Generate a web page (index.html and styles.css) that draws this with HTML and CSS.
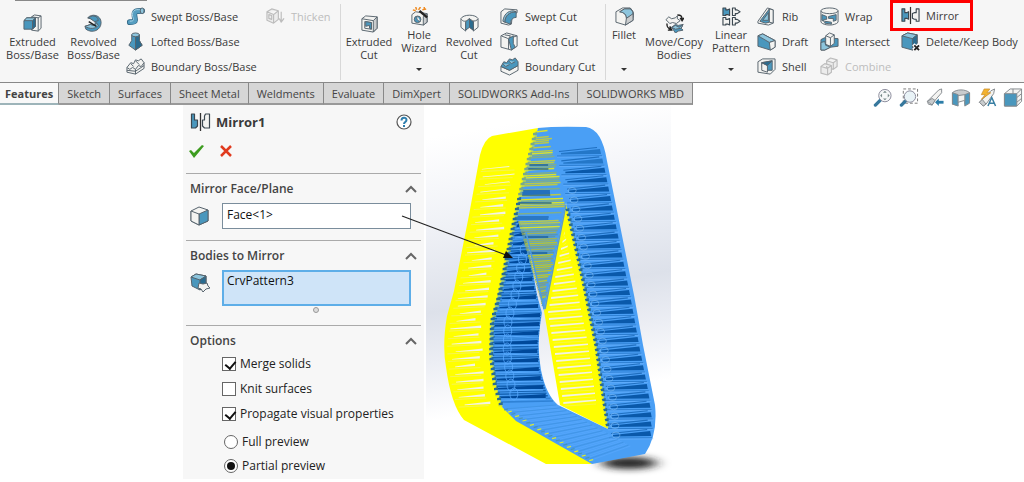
FILE: index.html
```html
<!DOCTYPE html>
<html lang="en">
<head>
<meta charset="utf-8">
<title>Mirror feature</title>
<link rel="stylesheet" href="styles.css">
</head>
<body>
<svg class="defs" aria-hidden="true">
  <symbol id="extrude" viewBox="0 0 20 20"><g class="o"><path class="w" d="M9 3l3-2 7 1v13l-3 3-7-1z"/><path class="w" d="M9 3l7 1v14M16 4l3-2"/><path class="b" d="M1 7l3-3h9v9l-3 3H1z"/><path class="d" d="M10 7l3-3v9l-3 3z"/><path class="l" d="M1 7l3-3h9l-3 3z"/></g></symbol>
  <symbol id="revolve" viewBox="0 0 20 20"><g class="o"><path class="b" d="M4 4C8-1 18 1 18 9c0 8-9 12-16 7l-1-3 6-2c4 2 6-1 4-4L7 5z"/><path class="l" d="M1 13l6-2c3 2 6 1 6-2l2 3c-3 4-9 4-14 1z"/><path class="b" d="M4 4l5-2c4 0 6 2 6 5l-4 1-4-3z"/></g><path d="M5 8l8 5" stroke="#222" stroke-width="1.500" fill="none"/></symbol>
  <symbol id="sweep" viewBox="0 0 20 20"><path d="M4 16c7 0 6-2 5-6-1-6 2-6 8-6" fill="none" stroke="#2f6482" stroke-width="6" stroke-linecap="round"/><path d="M4 16c7 0 6-2 5-6-1-6 2-6 8-6" fill="none" stroke="#559dc0" stroke-width="4.500" stroke-linecap="round"/><path d="M4 15c5 0 4-2 3-5-1-6 2-8 8-7" fill="none" stroke="#a8d3e5" stroke-width="1"/><ellipse cx="17" cy="4" rx="2" ry="3" class="l o"/></symbol>
  <symbol id="loft" viewBox="0 0 20 20"><g class="o"><path class="b" d="M6 3v6L3 14l7 5 7-5-3-5V3z"/><path class="d" d="M10 4l4-1v6l3 5-7 5z"/><ellipse class="l" cx="10" cy="3" rx="4" ry="2"/></g></symbol>
  <symbol id="boundary" viewBox="0 0 20 20"><g class="o"><path class="w" d="M1 11l4-5 3 1 2-4 3 1 3-2 3 4v6l-9 6-9-2z"/><path class="w" d="M1 11l3 2 3-2 3 2 3-4 3 1 3-4M10 13v5M5 7l3 3M10 4l4 4M1 14l9 1 9-6"/></g></symbol>
  <symbol id="thicken" viewBox="0 0 20 20"><g class="g"><path d="M1 5l5-3 7 2v9l-5 4-7-3zM1 5l7 3 5-4M8 8v9M3 8l3 1v4l-3-1z"/><path d="M16 5v10m-2-3l2 4 3-4"/></g></symbol>
  <symbol id="cutbox" viewBox="0 0 20 20"><g class="o"><path class="w" d="M2 5l4-3 12 1v12l-4 4-12-2z"/><path class="q" d="M14 7l4-4v12l-4 4z"/><path class="w" d="M2 5l12 2M5 8l7 1v7l-7-1z"/><path class="b" d="M6 8l6 1v7l-2-1v-3L6 13z"/></g></symbol>
  <symbol id="hole" viewBox="0 0 20 20"><g class="o"><path class="w" d="M2 8l4-3 12 2v9l-4 3-12-2z"/><path class="q" d="M14 10l4-3v9l-4 3z"/><circle class="b" cx="8" cy="13" r="3.500"/><path class="w" d="M8 10c-2 2 0 5 3 5"/></g><path d="M10 4l8 7" stroke="#222" stroke-width="2.500"/><path d="M6 0l1 3M11 0l-2 3M3 3l3 1M13 3l4-1M15 0v3" stroke="#ef8c24" stroke-width="1.600"/></symbol>
  <symbol id="revcut" viewBox="0 0 20 20"><g class="o"><path class="w" d="M1 5c2-5 16-5 18 0v9l-5 4v-9l-4-3-4 3v9l-5-4z"/><path class="b" d="M6 7l4-2 4 3v9l-4-3-4 3z"/><path class="d" d="M10 5l4 3v9l-4-3z"/><path class="w" d="M1 5c2 3 4 3 6 2l3-2 3 2c2 1 5 0 6-2"/></g></symbol>
  <symbol id="sweepcut" viewBox="0 0 20 20"><g class="o"><path class="w" d="M1 5l4-3 13 1v3l-5 2-1 10-3 1-8-2z"/><path class="b" d="M5 16c0-7 5-11 12-11v6c-4 0-6 3-6 7z"/><path class="l" d="M5 16c0-7 5-11 12-11l-3-1C8 4 4 8 3 15z"/></g></symbol>
  <symbol id="loftcut" viewBox="0 0 20 20"><g class="o"><path class="w" d="M1 4l6-3 11 3v11l-6 4-11-3z"/><path class="w" d="M1 4l8 3v11M9 7l9-3"/><path class="b" d="M9 7l5-3v8l2 4-4 3z"/><path class="w" d="M5 3l6 1-2 3"/></g></symbol>
  <symbol id="boundcut" viewBox="0 0 20 20"><g class="o"><path class="w" d="M1 10l9 4 9-5v5l-9 5-9-4z"/><path class="b" d="M1 10l3-5 3 1 3-4 3 1 3-2 3 4v4l-9 5z"/><path class="l" d="M3 7l3 3 4-2M9 4l3 3 4-2"/></g></symbol>
  <symbol id="fillet" viewBox="0 0 20 20"><g class="o"><path class="w" d="M1 5l7-4h8l3 4v9l-8 5-10-3z"/><path class="b" d="M5 5l5-3h7l2 4v5l-7 1c0-4-2-6-7-7z"/><path class="l" d="M5 5l5-3h6c3 2 3 4 3 6l-7 4c0-4-2-6-7-7z"/><path class="q" d="M12 12l7-5v7l-8 5z"/></g></symbol>
  <symbol id="move" viewBox="0 0 20 20"><g class="o"><path class="w" d="M1 6l3-3 3 2 4-1 2-2v3l3 2-4 3-4-1-3 1z"/><path class="b" d="M7 14l4-3 3 1 5-1-2 4 2 2-5 1-3 2z"/><path class="l" d="M7 14l4-2 4 2 4-3-2 4-6 1z"/></g><path d="M13 1c4 0 5 1 5 5m-2-2l2 3 2-3M2 10c0 4 1 5 4 6m-3 1h4l-2-4" stroke="#222" fill="none" stroke-width="1.500"/></symbol>
  <symbol id="pattern" viewBox="0 0 20 20"><g class="k"><path class="b" d="M1 1h3v2h2l2-1v7l-2-1H4v1H1z"/><path class="w" d="M11 1h3v2h2l3 2-3 2h-2v2h-3zM1 11h3v2h2l2-1v7l-2-1H4v1H1zM11 11h3v2h2l3 2-3 2h-2v2h-3z"/></g></symbol>
  <symbol id="rib" viewBox="0 0 20 20"><g class="o"><path class="w" d="M1 15L11 1l6 2v14l-5 2-11-2z"/><path class="b" d="M3 15L13 2v14l-4 1z"/><path class="l" d="M6 14l6-8v8z"/><path class="w" d="M13 2l4 1v14l-4-1z"/></g></symbol>
  <symbol id="draft" viewBox="0 0 20 20"><g class="o"><path class="b" d="M1 4l5-2 13 7v7l-5 3-13-4z"/><path class="l" d="M1 4l5-2 13 7-6 2z"/><path class="w" d="M13 11l6-2v7l-5 3z"/></g></symbol>
  <symbol id="shell" viewBox="0 0 20 20"><g class="o"><path class="w" d="M1 5l5-3h13v11l-5 5-13-2z"/><path class="b" d="M5 6l11-2v10H6z"/><path class="w" d="M5 6l6 3v7l-6-2z"/><path class="d" d="M5 6l11-2-5 5z"/></g></symbol>
  <symbol id="wrap" viewBox="0 0 20 20"><g class="o"><path class="w" d="M1 4v12c3 4 15 4 18 0V4"/><ellipse class="w" cx="10" cy="4" rx="9" ry="3"/><path class="b" d="M2 8l5 2v3H4v2l-2-1zM9 10l8-2v6l-3 1v-3H9zM5 15l7 1v2l-7-1z"/></g></symbol>
  <symbol id="intersect" viewBox="0 0 20 20"><g class="o"><path class="b" d="M1 8l4-2 14 1v8l-8 1-6 3H1z"/><path class="w" d="M6 4l4-3 5 2v9l-4 3-5-2z"/><path class="w" d="M6 4l5 2v9M11 6l4-3"/><path class="l" d="M1 11l4-1 1 4 5 2-6 3H1z"/></g></symbol>
  <symbol id="combine" viewBox="0 0 20 20"><g class="g"><path d="M7 4l4-3 7 2v7l-4 3-7-2zM7 4l7 2 4-3M14 6v7"/><path d="M1 10l4-3 7 2v7l-4 3-7-2zM1 10l7 2 4-3M8 12v7"/></g></symbol>
  <symbol id="mirror" viewBox="0 0 20 20"><g class="k"><path class="b" d="M1 3h3v4h2l2-1v8l-2-1H4v3H1z"/><path class="w" d="M19 3h-3v4h-2l-2 1v5l2 1h2v2h3z"/></g><path d="M10 1v18" stroke="#333" stroke-width="1.300"/></symbol>
  <symbol id="mirror2" viewBox="0 0 20 20"><g class="k"><path class="b" d="M1 2h3v6h3v6l-2 2H1z"/><path class="w" d="M19 2h-4l-1 2v4h-2v6l2 2h5z"/></g><path d="M10 1v18" stroke="#333" stroke-width="1.300"/></symbol>
  <symbol id="delete" viewBox="0 0 20 20"><g class="o"><path class="b" d="M1 4l6-3 10 2v12l-5 4-11-3z"/><path class="l" d="M1 4l6-3 10 2-5 4z"/><path class="d" d="M12 7l5-4v12l-5 4z"/></g><path d="M13 13l6 6m0-6l-6 6" stroke="#fff" stroke-width="3.500"/><path d="M14 14l5 5m0-5l-5 5" stroke="#222" stroke-width="2"/></symbol>
  <symbol id="cube" viewBox="0 0 20 20"><g class="o"><path class="w" d="M1 5l8-4 9 3v11l-9 4-8-4z"/><path class="b" d="M9 8l9-4v11l-9 4z"/><path class="w" d="M1 5l8 3v11l-8-4z"/></g></symbol>
  <symbol id="body" viewBox="0 0 20 20"><g class="o"><path class="b" d="M1 4l5-3 10 2v9l-6 5-8-4z"/><path class="l" d="M1 4l5-3 10 2-6 4z"/><path class="d" d="M10 7l6-4v9l-6 5z"/><path class="w" d="M9 10l4 1 4-1 1 3 2 2-4 1-3 3-2-3-3-1z"/></g></symbol>
  <symbol id="zoomfit" viewBox="0 0 20 20"><path d="M7 13l-5 5" stroke="#37789d" stroke-width="3.500" stroke-linecap="round"/><circle cx="12" cy="8" r="6.500" fill="#f6f8f8" stroke="#889"/><path d="M12 3l2 2h-4zM12 13l2-2h-4zM7 8l2-2v4zM17 8l-2-2v4z" fill="#788"/></symbol>
  <symbol id="zoomarea" viewBox="0 0 20 20"><path d="M4 1h15v15H4z" fill="none" stroke="#777" stroke-dasharray="3 2"/><path d="M7 13l-5 5" stroke="#37789d" stroke-width="3.500" stroke-linecap="round"/><circle cx="11" cy="9" r="6" fill="#e9f3f7" stroke="#889"/></symbol>
  <symbol id="prev" viewBox="0 0 20 20"><g class="t"><path class="w" d="M2 14L14 2l3-1v4l-7 8-3 5-4-1z"/><path class="q" d="M2 14l5 4 3-5-3-2z"/></g><path d="M19 15h-6" stroke="#2c7da8" stroke-width="3"/><path d="M10 15l4-4v8z" fill="#2c7da8"/></symbol>
  <symbol id="section" viewBox="0 0 20 20"><g class="t"><path class="q" d="M1 5c4-4 14-4 18 0v9l-5 3V8l-8 1v9l-5-1z"/><path class="b" d="M1 5l6 2v12l-6-2zM14 7l5-2v11l-5 3z"/><path class="w" d="M7 8l7-1v6l-7 2z"/></g></symbol>
  <symbol id="appear" viewBox="0 0 20 20"><g class="t"><path class="w" d="M2 15L14 3l4-2-1 5-8 11-3 2z"/><path class="q" d="M2 15l4 4 3-2-4-5z"/></g><path d="M7 1h6l-3 4h4L4 12l4-5H4z" fill="#f3b22e" stroke="#c48a2c" stroke-width=".7"/><path d="M11 19l4-9 4 9M12 16h6" stroke="#397fa3" stroke-width="1.600" fill="none"/></symbol>
  <symbol id="orient" viewBox="0 0 20 20"><g class="t"><path class="w" d="M1 6l6-5h12v13l-5 5H1z"/><path class="b" d="M1 6h13v13H1z"/><path d="M14 6l5-5M10 1v5M14 10l5-4M14 15l5-4" fill="none"/></g></symbol>
  <symbol id="chev" viewBox="0 0 12 8"><path d="M1 7l5-5 5 5" fill="none" stroke="#666" stroke-width="2"/></symbol>
</svg>

<header class="ribbon">
  <div class="group">
    <button class="big wide"><svg><use href="#extrude"/></svg>Extruded<br>Boss/Base</button>
    <button class="big wide"><svg><use href="#revolve"/></svg>Revolved<br>Boss/Base</button>
    <div class="stack boss">
      <button><svg><use href="#sweep"/></svg>Swept Boss/Base</button>
      <button><svg><use href="#loft"/></svg>Lofted Boss/Base</button>
      <button><svg><use href="#boundary"/></svg>Boundary Boss/Base</button>
    </div>
    <div class="stack thick">
      <button disabled><svg><use href="#thicken"/></svg>Thicken</button>
    </div>
  </div>
  <div class="group cuts">
    <button class="big"><svg><use href="#cutbox"/></svg>Extruded<br>Cut</button>
    <button class="big menu"><svg><use href="#hole"/></svg>Hole<br>Wizard</button>
    <button class="big"><svg><use href="#revcut"/></svg>Revolved<br>Cut</button>
    <div class="stack cut">
      <button><svg><use href="#sweepcut"/></svg>Swept Cut</button>
      <button><svg><use href="#loftcut"/></svg>Lofted Cut</button>
      <button><svg><use href="#boundcut"/></svg>Boundary Cut</button>
    </div>
  </div>
  <div class="group last">
    <button class="big slim menu"><svg><use href="#fillet"/></svg>Fillet</button>
    <button class="big wider"><svg><use href="#move"/></svg>Move/Copy<br>Bodies</button>
    <button class="big menu"><svg><use href="#pattern"/></svg>Linear<br>Pattern</button>
    <div class="stack rib">
      <button><svg><use href="#rib"/></svg>Rib</button>
      <button><svg><use href="#draft"/></svg>Draft</button>
      <button><svg><use href="#shell"/></svg>Shell</button>
    </div>
    <div class="stack wrap">
      <button><svg><use href="#wrap"/></svg>Wrap</button>
      <button><svg><use href="#intersect"/></svg>Intersect</button>
      <button disabled><svg><use href="#combine"/></svg>Combine</button>
    </div>
    <div class="stack mirror">
      <button class="marked"><svg><use href="#mirror"/></svg>Mirror</button>
      <button><svg><use href="#delete"/></svg>Delete/Keep Body</button>
    </div>
  </div>
</header>

<nav class="tabs">
  <button class="on">Features</button><button>Sketch</button><button>Surfaces</button><button>Sheet Metal</button><button>Weldments</button><button>Evaluate</button><button>DimXpert</button><button>SOLIDWORKS Add-Ins</button><button>SOLIDWORKS MBD</button>
  <div class="views">
    <button aria-label="Zoom to fit"><svg><use href="#zoomfit"/></svg></button>
    <button aria-label="Zoom to area"><svg><use href="#zoomarea"/></svg></button>
    <button aria-label="Previous view"><svg><use href="#prev"/></svg></button>
    <button aria-label="Section view"><svg><use href="#section"/></svg></button>
    <button aria-label="Appearance"><svg><use href="#appear"/></svg></button>
    <button aria-label="View orientation"><svg><use href="#orient"/></svg></button>
  </div>
</nav>

<main class="work">
  <form class="panel">
    <div class="title"><svg><use href="#mirror2"/></svg><h1>Mirror1</h1>
      <button type="button" class="help" aria-label="Help"><svg viewBox="0 0 16 16"><circle cx="8" cy="8" r="7" fill="#fff" stroke="#555" stroke-width="1.200"/><path d="M5.500 6.500C5.500 3 10.500 3 10.500 6c0 2-2.500 2-2.500 4M8 11v2" fill="none" stroke="#2f7fae" stroke-width="2"/></svg></button>
    </div>
    <div class="confirm">
      <button type="button" aria-label="OK"><svg viewBox="0 0 16 16"><path d="M1 8l2-1 3 3 8-8 2 1L6 15z" fill="#3d9c1f"/></svg></button>
      <button type="button" aria-label="Cancel"><svg viewBox="0 0 16 16"><path d="M3 3l10 10M13 3L3 13" stroke="#e03a1e" stroke-width="2.500"/></svg></button>
    </div>
    <section>
      <h2><label for="face">Mirror Face/Plane</label><button type="button" aria-label="Collapse"><svg><use href="#chev"/></svg></button></h2>
      <div class="field"><svg><use href="#cube"/></svg><input id="face" type="text" value="Face&lt;1&gt;"></div>
    </section>
    <section>
      <h2><label for="bodies">Bodies to Mirror</label><button type="button" aria-label="Collapse"><svg><use href="#chev"/></svg></button></h2>
      <div class="field"><svg><use href="#body"/></svg><textarea id="bodies" rows="1">CrvPattern3</textarea></div>
      <div class="grip"></div>
    </section>
    <section>
      <h2>Options<button type="button" aria-label="Collapse"><svg><use href="#chev"/></svg></button></h2>
      <div class="checks">
        <label><input type="checkbox" checked>Merge solids</label>
        <label><input type="checkbox">Knit surfaces</label>
        <label><input type="checkbox" checked>Propagate visual properties</label>
      </div>
      <div class="radios">
        <label><input type="radio" name="preview">Full preview</label>
        <label><input type="radio" name="preview" checked>Partial preview</label>
      </div>
    </section>
  </form>
  <div class="scene">
    <svg id="model" viewBox="0 0 245 374" role="img" aria-label="Mirrored body preview">
      <defs>
        <filter id="soft" x="-50%" y="-100%" width="200%" height="300%"><feGaussianBlur stdDeviation="7 3"/></filter>
      </defs>
      <ellipse cx="203" cy="358" rx="28" ry="6" fill="#222" filter="url(#soft)"/>
      <path fill="#ff0" d="M112 23L66 31Q58 34 54 50L43 110 28 186 21 211Q16 240 20 262 25 300 38 315L120 359H166L150 338 76 302 92 115z"/>
      <path fill="#ff0" d="M140 98L118 206 134 300 182 324 172 240z"/>
      <path fill="#4a9ff5" d="M112 23Q130 21 160 22 176 24 181 56L208 190 217 240 229 300Q232 330 219 349L166 359 90 316 76 302Q60 250 66 215L78 166 96 80zM140 98L118 206 100 127 111 190 116 208Q110 240 115 265 120 290 132 300L182 324 170 240 158 180z" fill-rule="evenodd"/>
      <g id="ribs"></g>
    </svg>
  </div>
  <svg class="leader" viewBox="0 0 120 50" aria-hidden="true"><path d="M2 4L106 43" stroke="#222" stroke-width="1.200"/><path d="M113 46l-10 0 3-7z" fill="#111"/></svg>
</main>
<script src="model.js"></script>
</body>
</html>
```

FILE: styles.css
```css
* { box-sizing: border-box; }
body { margin: 0; background: #fff; color: #3a3a3a; font: 500 11px/13px "Open Sans", "Noto Sans", sans-serif; }
button { border: 0; padding: 0; margin: 0; background: none; font: inherit; color: inherit; white-space: nowrap; }
svg { display: block; flex: none; overflow: visible; }
.defs { width: 0; height: 0; position: absolute; }
.o { stroke: #56636d; stroke-width: 1; stroke-linejoin: round; }
.k { stroke: #3c4851; stroke-width: 1.2px; stroke-linejoin: round; }
.t { stroke: #84898d; stroke-width: 1; stroke-linejoin: round; }
.w { fill: #f3f3f1; }
.q { fill: #c9ccce; }
.b { fill: #4a97bd; }
.d { fill: #2a6c90; }
.l { fill: #8dc5dd; }
.g { fill: #ececec; stroke: #bcbcbc; stroke-width: 1.2px; stroke-linejoin: round; }

.ribbon { display: flex; background: #f6f6f6 linear-gradient(#888, #888) 15px 0 / 132px 1px no-repeat; height: 82px; padding-top: 4px; overflow: hidden; }
.group { display: flex; border-right: 1px solid #d8d8d8; height: 76px; padding-left: 2px; }
.group.cuts { padding-left: 3px; }
.group.last { border: 0; padding-left: 0; flex: 1; }
.big { width: 50px; display: flex; flex-direction: column; align-items: center; padding-top: 10px; }
.big svg { width: 19px; height: 19px; margin-bottom: 2px; }
.big.menu { padding-top: 3px; position: relative; }
.big.menu::after { content: ""; position: absolute; bottom: 9px; border: 3px solid transparent; border-top-color: #333; border-bottom: 0; }
.big.wide { width: 61px; }
.big.slim { width: 36px; }
.big.wider { width: 64px; }
.stack { display: flex; flex-direction: column; }
.stack button { display: flex; align-items: center; gap: 6px; height: 25px; }
.stack svg { width: 19px; height: 19px; }
.stack button:disabled { color: #bdbdbd; }
.boss { width: 140px; margin-left: 2px; }
.thick { width: 74px; }
.cut { margin-left: 6px; width: 105px; }
.rib { margin-left: 1px; width: 63px; }
.wrap { width: 81px; }
.mirror .marked { outline: 3px solid #f00; margin: -1px 0 1px -8px; padding-left: 8px; width: 77px; }

.tabs { display: flex; height: 23px; border-top: 1px solid #888; font-size: 11px; color: #444; }
.tabs > button { border-right: 1px solid #888; border-bottom: 2px solid #999; background: #d6d6d6; padding: 0 8px; }
.tabs > button.on { background: #f8f8f8; font-weight: 700; padding: 0 5px; border-bottom-color: #9db4b9; }
.views { display: flex; gap: 6px; margin-left: auto; padding: 5px 1px 0 0; }
.views svg { width: 20px; height: 19px; }

.work { display: flex; gap: 2px; padding-left: 183px; position: relative; align-items: flex-start; }
.panel { width: 241px; background: #f7f7f7; padding: 2px 3px 1px; font-size: 12px; line-height: 16px; }
.title { display: flex; align-items: center; gap: 5px; height: 30px; padding: 0 9px 0 4px; }
.title > svg { width: 21px; height: 20px; }
h1 { margin: 0; font-size: 13px; flex: 1; }
.help svg { width: 16px; height: 16px; }
.confirm { display: flex; gap: 14px; height: 36px; padding: 6px 2px; align-items: flex-start; }
.confirm svg { width: 16px; height: 16px; }
section { border-top: 1px solid #aaa; padding: 7px 4px 11px; }
h2 { margin: 0 0 6px; font-size: 12px; font-weight: 600; display: flex; justify-content: space-between; align-items: center; color: #444; }
h2 svg { width: 12px; height: 8px; }
.field { display: flex; gap: 12px; padding-right: 6px; }
.field svg { width: 20px; height: 22px; margin-top: 2px; }
.field input, .field textarea { flex: 1; min-width: 0; border: 1px solid #7a8d9c; background: #fff; font: inherit; color: #111; padding: 0 4px 3px; height: 26px; outline: 0; border-radius: 0; resize: none; overflow: hidden; }
.field textarea { height: 36px; border: 2px solid #5eaee8; background: #cfe4f8; padding: 1px 3px; }
.grip { width: 6px; height: 6px; border: 1px solid #999; background: #ddd; border-radius: 50%; margin: 1px 0 1px 123px; }
.checks, .radios { display: flex; flex-direction: column; gap: 9px; padding-left: 32px; }
.checks { margin-top: 7px; }
.radios { gap: 8px; margin: 12px 0 -7px; padding-left: 34px; }
.checks label, .radios label { display: flex; align-items: center; gap: 4px; color: #222; }
.checks input, .radios input { appearance: none; width: 14px; height: 14px; margin: 0; border: 1px solid #666; background: #fff; }
.checks input:checked::before { content: ""; display: block; width: 5px; height: 8px; margin: 1px 0 0 4px; border: solid #111; border-width: 0 2px 2px 0; transform: rotate(40deg); }
.radios input { border-radius: 50%; }
.radios input:checked::before { content: ""; display: block; width: 8px; height: 8px; margin: 2px; border-radius: 50%; background: #111; }
.scene { width: 245px; background: linear-gradient(170deg, #fff 8%, #eff1f6 30%, #dde1ea 50%, #eceef4 62%, #fff 76%); }
.leader { position: absolute; left: 400px; top: 107px; width: 120px; height: 50px; }
```

FILE: model.js
```js
// Draws the spring-like ribs between pairs of edge curves.
const out = [];
let seed = 7;
const rnd = () => (seed = (seed * 16807) % 2147483647) / 2147483647;
const at = (pts, y) => {
  for (let i = 1; i < pts.length; i++) {
    if (y <= pts[i][1]) {
      const [x0, y0] = pts[i - 1], [x1, y1] = pts[i];
      return x0 + (x1 - x0) * (y - y0) / (y1 - y0);
    }
  }
  return pts[pts.length - 1][0];
};
const poly = (pts, fill) => out.push(`<path d="M${pts.map(p => p.map(n => n.toFixed(1)).join(" ")).join("L")}z" fill="${fill}"/>`);
const line = (x0, y0, x1, y1, c, w = 0.7) => out.push(`<path d="M${x0.toFixed(1)} ${y0.toFixed(1)}L${x1.toFixed(1)} ${y1.toFixed(1)}" stroke="${c}" stroke-width="${w}"/>`);

const outerL = [[66, 31], [54, 50], [43, 110], [28, 186], [21, 211], [18, 240], [20, 262], [26, 290], [38, 315]];
const seam = [[110, 24], [96, 80], [88, 116], [78, 166], [73, 190], [66, 215], [65, 250], [69, 280], [76, 302]];
const innerR = [[92, 112], [100, 127], [111, 186], [116, 208], [113, 240], [115, 265], [122, 290], [132, 300]];
const yellowL = [[140, 98], [118, 206], [134, 300]];
const teeth = [[140, 98], [158, 180], [170, 240], [182, 324]];
const outerR = [[166, 24], [176, 36], [181, 56], [208, 190], [217, 240], [226, 285], [229, 310], [228, 330], [220, 346]];

// gaps in the yellow outer band
for (let y = 62; y < 304; y += 7.6) {
  const a = at(outerL, y), b = at(seam, y), s = a + 4 + rnd() * 8, e = b - 8 - rnd() * 10;
  const h = y > 90 ? 2.4 : 1;
  poly([[s, y + 2], [e, y - 1], [e, y - 1 + h], [s, y + 2.6]], "#f3f3e6");
  line(a + 3, y + 4.5, b - 12, y + 3, "#f0ee88", 0.6);
}
// gaps in the yellow inner band
for (let y = 128; y < 300; y += 7) {
  const a = Math.max(at(yellowL, y), 118), b = at(teeth, y);
  poly([[a + 4, y + 1], [b - 8, y - 1.5], [b - 8, y], [a + 4, y + 3]], "#f3f2e2");
  line(a + 5, y + 5, b - 8, y + 3, "#f0ee88", 0.5);
}
// dark inner face on the left
for (let y = 114; y < 298; y += 2.6) {
  const a = at(seam, y) + 1, b = at(innerR, y) - 1;
  line(a, y + 1, b, y, rnd() < 0.6 ? "#1563b4" : "#2f82d6", 1.6);
}
for (let y = 118; y < 290; y += 9) {
  const a = at(seam, y), b = at(innerR, y);
  poly([[a + 3, y + 3], [b - 2, y], [b - 2, y + 4], [a + 3, y + 4]], "#00499b");
  line(a + 3, y + 6, b - 2, y + 5, "#58aaff", 1);
  if (y > 140) out.push(`<ellipse cx="${a + 16}" cy="${y}" rx="4" ry="6" fill="none" stroke="#58aaff" stroke-width=".8"/>`);
}
// overlap of both bodies
for (let y = 26; y < 202; y += 2) {
  const a = y < 115 ? at(seam, y) : at([[92, 115], [118, 206]], y);
  const b = y < 98 ? 124 + (y - 24) * 0.2 : at(yellowL, y);
  const pick = y < 125 ? ["#4a9ff5", "#d9e22c", "#7fae8a", "#b9c94a"] : ["#b6c433", "#5a97b0", "#7aa18a", "#9bb35c"];
  line(a, y + 1, b - rnd() * 4, y - 0.5, pick[Math.floor(rnd() * 4)], 1.3);
  if (y > 55 && y < 150 && rnd() < 0.25) line(a + 2, y, a + (b - a) * 0.7, y, "#0c5296", 1.2);
}
line(100, 127, 118, 204, "#4f9be0", 1.5);
line(140, 100, 119, 204, "#5f9cc0", 1.5);
// right band
for (let y = 44; y < 334; y += 9.4) {
  const b = at(outerR, y) - 3, a = Math.max(at(teeth, y) + 5, b - 40);
  poly([[a, y + 4], [b - 1, y], [b, y + 5], [a, y + 5.4]], y < 60 ? "#2477c8" : "#0a59aa");
  line(a - 2, y + 2.5, b - 4, y - 1.5, "#1f6fc0", 1.1);
  line(a - 4, y + 7, b + 1, y + 6.8, "#2a7ccf", 1);
  line(a - 4, y + 8.2, b + 2, y + 7.8, "#6db4ff", 0.6);
  if (y > 80) out.push(`<ellipse cx="${a + 3}" cy="${y + 4}" rx="4" ry="3" fill="none" stroke="#8cc4f6" stroke-width=".5"/>`);
}
// lower band
for (let i = 0; i < 44; i++) {
  const t = i / 44;
  line(78 + t * 90, 304 + t * 52, 130 + t * 76, 300 + t * 42, i % 3 ? "#5aaaff" : "#3c8ede", 0.6);
}
// serrated seams
for (let y = 28; y < 302; y += 5) {
  const a = at(seam, y);
  poly([[a - 2, y], [a + 2, y - 1], [a + 2, y + 2], [a - 2, y + 2.4]], y > 90 ? "#2a6c90" : "#7aa98a");
  line(a - 2, y + 3, a + 2, y + 3, "#d8ea35", 1);
}
for (let y = 104; y < 320; y += 5) {
  const a = at(teeth, y);
  poly([[a - 2, y], [a + 2, y - 1], [a + 2, y + 2], [a - 1, y + 2.4]], "#2a6c90");
  line(a - 2, y + 3, a + 1, y + 3, "#d8ea35", 1);
}
for (let i = 0; i < 24; i++) {
  const x = 78 + i * 3.7, y = 305 + i * 2.2;
  line(x, y, x + 4, y - 1, i % 2 ? "#d8ea35" : "#4795b8", 1.2);
}
document.getElementById("ribs").innerHTML = out.join("");
```
